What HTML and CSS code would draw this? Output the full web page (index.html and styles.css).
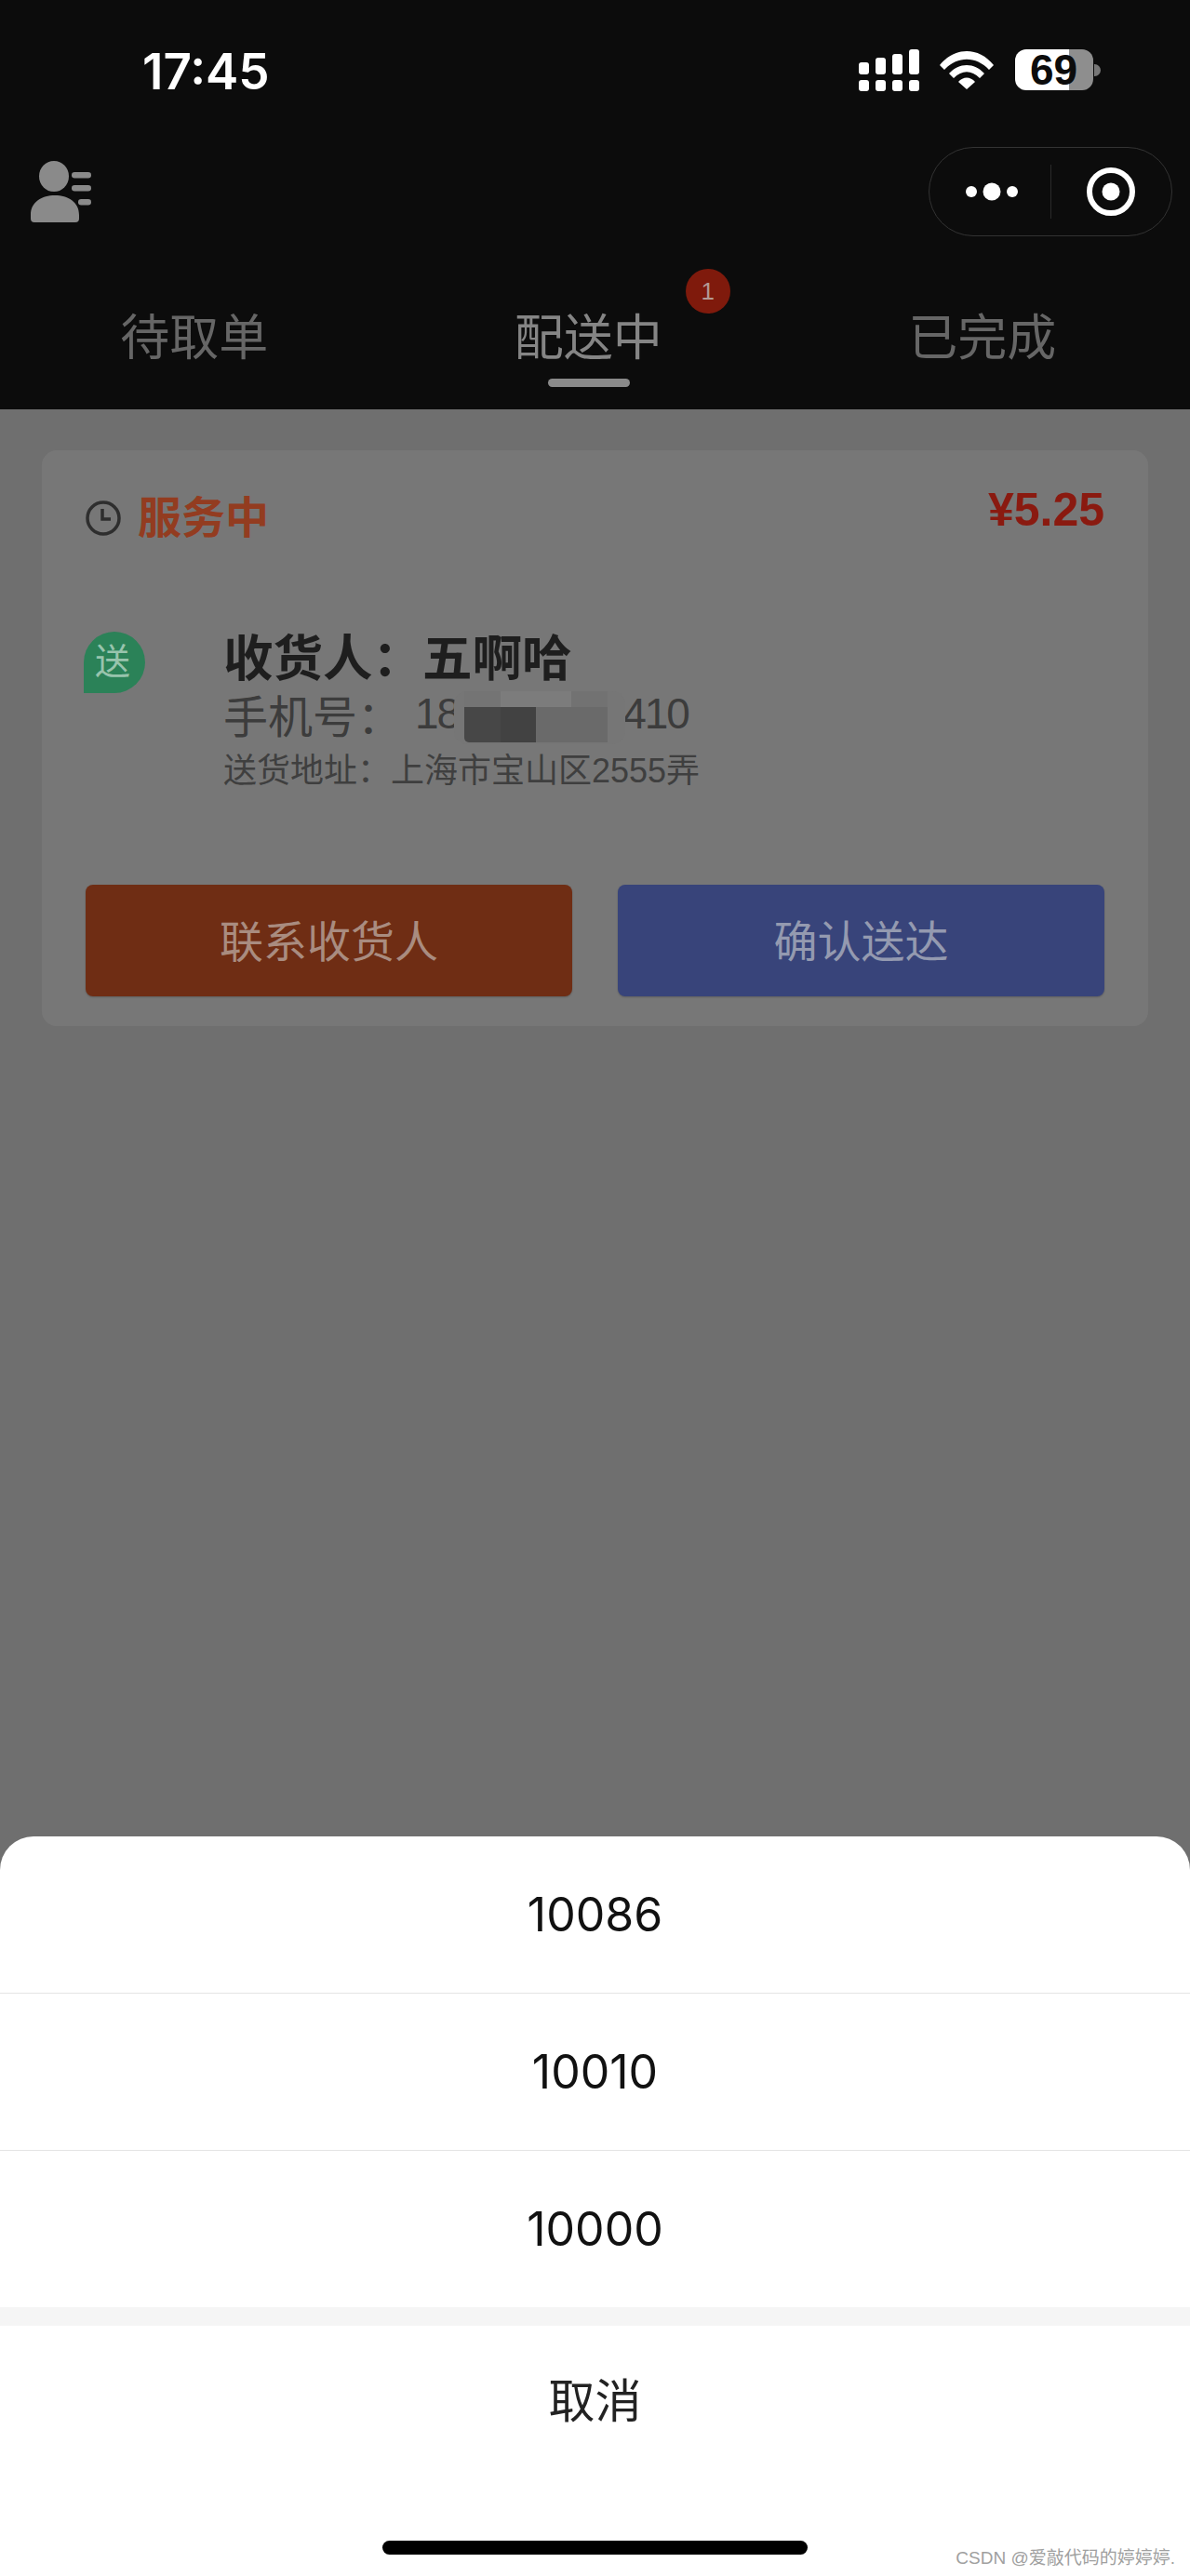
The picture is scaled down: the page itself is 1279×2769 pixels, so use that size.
FILE: index.html
```html
<!DOCTYPE html>
<html lang="zh-CN">
<head>
    <meta charset="UTF-8">
    <meta name="viewport" content="width=device-width, initial-scale=1.0">
    <title>配送中</title>
    <link rel="stylesheet" href="styles.css">
</head>
<body>
    <div class="pagina">
        <header class="topo">
            <div class="status">
                <span class="hora">17:45</span>
                <div class="status-icones">
                    <svg class="sinal" width="65" height="45" viewBox="0 0 65 45" fill="#fff">
                        <rect x="0" y="33" width="11" height="12" rx="3"/>
                        <rect x="18" y="33" width="11" height="12" rx="3"/>
                        <rect x="36" y="33" width="11" height="12" rx="3"/>
                        <rect x="54" y="33" width="11" height="12" rx="3"/>
                        <rect x="0" y="14" width="11" height="13" rx="3"/>
                        <rect x="18" y="9" width="11" height="18" rx="3"/>
                        <rect x="36" y="5" width="11" height="22" rx="3"/>
                        <rect x="54" y="0" width="11" height="27" rx="3"/>
                    </svg>
                    <svg class="wifi" width="58" height="41" viewBox="0 0 58 41" fill="#fff">
                        <path d="M0 15 C16 -5 42 -5 58 15 L53 20 C39 5 19 5 5 20 Z"/>
                        <path d="M10 24 C21 12 37 12 48 24 L43 29 C34 20 24 20 15 29 Z"/>
                        <path d="M20 33 C25 27 33 27 38 33 L29 41 Z"/>
                    </svg>
                    <div class="bateria">
                        <div class="bateria-corpo"><span class="bateria-texto">69</span></div>
                        <div class="bateria-ponta"></div>
                    </div>
                </div>
            </div>
            <div class="barra">
                <svg class="perfil" width="65" height="66" viewBox="0 0 65 66" fill="#8a8a8a">
                    <ellipse cx="25" cy="16.5" rx="16" ry="16.5"/>
                    <path d="M0 66 L0 58 C0 44 12 37 26 37 C40 37 52 44 52 58 L52 62 Q52 66 48 66 L4 66 Q0 66 0 62 Z"/>
                    <rect x="44" y="12" width="21" height="6.5" rx="3.2"/>
                    <rect x="44" y="26" width="21" height="6.5" rx="3.2"/>
                    <rect x="51" y="41" width="14" height="6.5" rx="3.2"/>
                </svg>
                <div class="capsula">
                    <div class="capsula-lado">
                        <svg class="pontos" width="56" height="20" viewBox="0 0 56 20" fill="#fff">
                            <circle cx="6" cy="10" r="6"/>
                            <circle cx="28" cy="10" r="9.5"/>
                            <circle cx="50" cy="10" r="6"/>
                        </svg>
                    </div>
                    <div class="capsula-divisor"></div>
                    <div class="capsula-lado">
                        <svg width="54" height="54" viewBox="0 0 54 54" fill="none">
                            <circle cx="27" cy="27" r="23" stroke="#fff" stroke-width="6"/>
                            <circle cx="27" cy="27" r="9.5" fill="#fff"/>
                        </svg>
                    </div>
                </div>
            </div>
            <nav class="abas">
                <div class="aba">待取单</div>
                <div class="aba ativa">配送中<span class="emblema">1</span></div>
                <div class="aba">已完成</div>
            </nav>
        </header>

        <main class="conteudo">
            <section class="cartao">
                <div class="cartao-topo">
                    <div class="estado">
                        <svg width="38" height="38" viewBox="0 0 38 38" fill="none" stroke="#2e2e2e" stroke-width="3.5">
                            <circle cx="19" cy="19" r="17"/>
                            <path d="M18 9 V20 H27"/>
                        </svg>
                        <span class="estado-texto">服务中</span>
                    </div>
                    <span class="preco">¥5.25</span>
                </div>
                <div class="info">
                    <div class="selo">送</div>
                    <div class="info-textos">
                        <div class="nome">收货人：五啊哈</div>
                        <div class="telefone">
                            <span class="telefone-rotulo">手机号：</span>
                            <span class="telefone-numero">18</span>
                            <div class="mosaico">
                                <i class="m1"></i><i class="m2"></i><i class="m3"></i>
                                <i class="m4"></i><i class="m5"></i><i class="m6"></i>
                            </div>
                            <span class="telefone-numero fim">410</span>
                        </div>
                        <div class="endereco">送货地址：上海市宝山区2555弄</div>
                    </div>
                </div>
                <div class="botoes">
                    <button class="botao contato">联系收货人</button>
                    <button class="botao confirmar">确认送达</button>
                </div>
            </section>
        </main>

        <div class="folha">
            <div class="opcao">10086</div>
            <div class="opcao">10010</div>
            <div class="opcao">10000</div>
            <div class="faixa"></div>
            <div class="cancelar">取消</div>
            <div class="home-barra"></div>
            <div class="marca">CSDN @爱敲代码的婷婷婷.</div>
        </div>
    </div>
</body>
</html>
```

FILE: styles.css
```css
* {
    box-sizing: border-box;
}

body {
    margin: 0;
    font-family: "Liberation Sans", "Noto Sans CJK SC", sans-serif;
    background-color: #6f6f6f;
}

.pagina {
    width: 1279px;
    height: 2769px;
    display: flex;
    flex-direction: column;
    overflow: hidden;
}

/* topo */
.topo {
    height: 440px;
    background-color: #0c0c0c;
    flex-shrink: 0;
}

.status {
    height: 158px;
    padding: 53px 96px 0 153px;
    display: flex;
    justify-content: space-between;
    align-items: flex-start;
}

.hora {
    font-family: Inter, sans-serif;
    font-weight: 600;
    font-size: 53px;
    line-height: 48px;
    color: #fff;
}

.status-icones {
    display: flex;
    align-items: flex-start;
}

.wifi {
    margin-left: 22px;
    margin-top: 2px;
}

.bateria {
    display: flex;
    align-items: center;
    margin-left: 23px;
}

.bateria-corpo {
    width: 84px;
    height: 44px;
    border-radius: 12px;
    background: linear-gradient(to right, #fff 58px, #8e8e8e 58px);
    display: flex;
    align-items: center;
    padding-left: 16px;
}

.bateria-texto {
    font-weight: 700;
    font-size: 46px;
    line-height: 44px;
    color: #0c0c0c;
}

.bateria-ponta {
    width: 7px;
    height: 13px;
    margin-left: 1px;
    background-color: #777;
    border-radius: 0 7px 7px 0;
}

.barra {
    height: 96px;
    padding: 0 19px 0 33px;
    display: flex;
    justify-content: space-between;
    align-items: center;
}

.capsula {
    width: 262px;
    height: 96px;
    border: 1px solid #333;
    border-radius: 48px;
    display: flex;
    align-items: center;
}

.capsula-lado {
    flex: 1;
    display: flex;
    justify-content: center;
    align-items: center;
}

.pontos {
    margin-left: 4px;
}

.capsula-divisor {
    width: 1px;
    height: 58px;
    background-color: #2a2a2a;
}

.abas {
    display: grid;
    grid-template-columns: repeat(3, 423.5px);
    margin: 80px 0 0 -3px;
}

.aba {
    position: relative;
    width: max-content;
    justify-self: center;
    font-size: 53px;
    line-height: 60px;
    color: #666;
}

.aba.ativa {
    color: #858585;
}

.aba.ativa::after {
    content: "";
    position: absolute;
    left: 36px;
    bottom: -22px;
    width: 88px;
    height: 9px;
    border-radius: 5px;
    background-color: #8a8a8a;
}

.emblema {
    position: absolute;
    top: -45px;
    right: -73px;
    width: 48px;
    height: 48px;
    border-radius: 50%;
    background-color: #7f1a0c;
    color: #b39a94;
    font-size: 26px;
    line-height: 48px;
    text-align: center;
}

/* cartao */
.conteudo {
    flex: 1;
    padding: 44px 45px 0;
}

.cartao {
    height: 619px;
    background-color: #777;
    border-radius: 16px;
    padding: 42px 47px 0;
}

.cartao-topo {
    display: flex;
    justify-content: space-between;
    align-items: flex-start;
}

.estado {
    display: flex;
    align-items: center;
    gap: 18px;
    margin-top: 5px;
}

.estado-texto {
    font-size: 47px;
    line-height: 52px;
    font-weight: 700;
    color: #933c20;
}

.preco {
    font-size: 50px;
    line-height: 50px;
    font-weight: 700;
    color: #8a1a10;
    margin-top: -3px;
}

.info {
    display: flex;
    margin-top: 96px;
}

.selo {
    width: 66px;
    height: 66px;
    border-radius: 33px 33px 33px 0;
    background-color: #2b8258;
    color: #98c4ad;
    font-size: 38px;
    line-height: 64px;
    padding-right: 4px;
    text-align: center;
    margin-left: -2px;
    flex-shrink: 0;
}

.info-textos {
    margin-left: 84px;
}

.nome {
    font-size: 53.5px;
    line-height: 60px;
    font-weight: 700;
    color: #1e1e1e;
}

.telefone {
    display: flex;
    align-items: center;
    height: 56px;
    font-size: 48px;
    color: #3c3c3c;
}

.telefone-rotulo {
    width: 206px;
}

.telefone-numero {
    font-size: 46px;
    letter-spacing: -2px;
}

.telefone-numero.fim {
    margin-left: -3px;
}

/* bloco borrado do numero */
.mosaico {
    position: relative;
    align-self: flex-start;
    width: 184px;
    height: 57px;
    margin: 4px 0 0 -5px;
    display: grid;
    grid-template-columns: 11px 39px 38px 38px 39px 19px;
    grid-template-rows: 17px 38px 2px;
    background-color: #767676;
    border-radius: 14px;
}

.mosaico i {
    display: block;
}

.m1 {
    grid-column: 2;
    grid-row: 1;
    background-color: #747474;
}

.m2 {
    grid-column: 3 / 5;
    grid-row: 1;
    background-color: #7c7c7c;
}

.m3 {
    grid-column: 5;
    grid-row: 1;
    background-color: #727272;
}

.m4 {
    grid-column: 2;
    grid-row: 2;
    background-color: #474747;
    border-radius: 0 0 0 5px;
}

.m5 {
    grid-column: 3;
    grid-row: 2;
    background-color: #424242;
}

.m6 {
    grid-column: 4 / 6;
    grid-row: 2;
    background-color: #6a6a6a;
}

.endereco {
    font-size: 36px;
    line-height: 42px;
    color: #3f3f3f;
    margin-top: 13px;
}

.botoes {
    display: flex;
    justify-content: space-between;
    margin-top: 101px;
}

.botao {
    width: 523px;
    height: 120px;
    padding: 0 0 6px;
    border: none;
    border-radius: 8px;
    font-family: inherit;
    font-size: 47px;
    box-shadow: 0 1px 2px rgba(0, 0, 0, 0.2);
}

.contato {
    background-color: #6f2d14;
    color: #a98c80;
}

.confirmar {
    background-color: #38447a;
    color: #949ab0;
}

/* folha inferior */
.folha {
    position: relative;
    height: 795px;
    flex-shrink: 0;
    background-color: #fff;
    border-radius: 36px 36px 0 0;
}

.opcao {
    height: 169px;
    border-bottom: 1px solid #e4e4e4;
    display: flex;
    justify-content: center;
    align-items: center;
    font-family: Inter, sans-serif;
    font-size: 50px;
    color: #111;
}

.opcao:nth-child(3) {
    border-bottom: none;
    height: 168px;
}

.faixa {
    height: 20px;
    background-color: #f5f5f5;
}

.cancelar {
    height: 160px;
    padding-bottom: 6px;
    display: flex;
    justify-content: center;
    align-items: center;
    font-size: 50px;
    color: #222;
}

.home-barra {
    width: 457px;
    height: 15px;
    margin: 71px auto 0;
    border-radius: 8px;
    background-color: #000;
}

.marca {
    position: absolute;
    right: 16px;
    bottom: 9px;
    font-size: 19px;
    line-height: 20px;
    color: #a0a0a0;
}
```
